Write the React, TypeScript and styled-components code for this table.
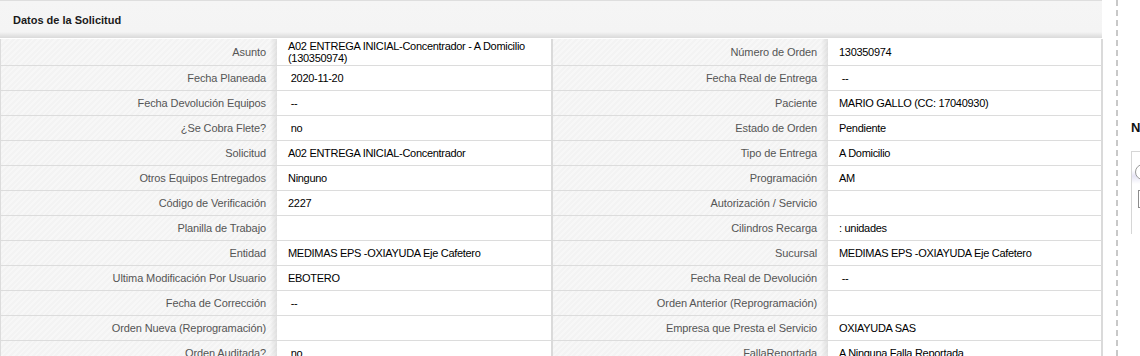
import React from 'react'
import styled, { createGlobalStyle } from 'styled-components'

const GlobalStyle = createGlobalStyle`
  html, body {
    margin: 0;
    padding: 0;
    background: #fff;
    overflow: hidden;
  }
  body {
    font-family: "Liberation Sans", Arial, sans-serif;
    font-size: 11px;
  }
`

type Field = [string, string]

// left and right halves of the request detail table
const rows: { left: Field; right: Field; tall?: boolean }[] = [
  { left: ['Asunto', 'A02 ENTREGA INICIAL-Concentrador - A Domicilio (130350974)'], right: ['Número de Orden', '130350974'], tall: true },
  { left: ['Fecha Planeada', '\u00a02020-11-20'], right: ['Fecha Real de Entrega', '\u00a0--'] },
  { left: ['Fecha Devolución Equipos', '\u00a0--'], right: ['Paciente', 'MARIO GALLO (CC: 17040930)'] },
  { left: ['¿Se Cobra Flete?', '\u00a0no'], right: ['Estado de Orden', 'Pendiente'] },
  { left: ['Solicitud', 'A02 ENTREGA INICIAL-Concentrador'], right: ['Tipo de Entrega', 'A Domicilio'] },
  { left: ['Otros Equipos Entregados', 'Ninguno'], right: ['Programación', 'AM'] },
  { left: ['Código de Verificación', '2227'], right: ['Autorización / Servicio', ''] },
  { left: ['Planilla de Trabajo', ''], right: ['Cilindros Recarga', ': unidades'] },
  { left: ['Entidad', 'MEDIMAS EPS -OXIAYUDA Eje Cafetero'], right: ['Sucursal', 'MEDIMAS EPS -OXIAYUDA Eje Cafetero'] },
  { left: ['Ultima Modificación Por Usuario', 'EBOTERO'], right: ['Fecha Real de Devolución', '\u00a0--'] },
  { left: ['Fecha de Corrección', '\u00a0--'], right: ['Orden Anterior (Reprogramación)', ''] },
  { left: ['Orden Nueva (Reprogramación)', ''], right: ['Empresa que Presta el Servicio', 'OXIAYUDA SAS'] },
  { left: ['Orden Auditada?', '\u00a0no'], right: ['FallaReportada', 'A Ninguna Falla Reportada'] },
]

const App: React.FC = () => {
  return (
    <>
      <GlobalStyle />
      <Layout>
        <Panel>
          <PanelHeader>Datos de la Solicitud</PanelHeader>
          <DetailGrid>
            {rows.map((row, i) => (
              <React.Fragment key={i}>
                <LabelCell $tall={row.tall}>{row.left[0]}</LabelCell>
                <ValueCell $tall={row.tall}>{row.left[1]}</ValueCell>
                <LabelCell $tall={row.tall}>{row.right[0]}</LabelCell>
                <ValueCell $tall={row.tall}>{row.right[1]}</ValueCell>
              </React.Fragment>
            ))}
          </DetailGrid>
        </Panel>

        <Sidebar>
          <SideTitle>N</SideTitle>
          <SideBox>
            <RadioDot />
            <SideInput />
          </SideBox>
        </Sidebar>
      </Layout>
    </>
  )
}

const Layout = styled.div`
  display: flex;
  align-items: flex-start;
  gap: 14px;
  height: 356px;
`

const Panel = styled.div`
  width: 1102px;
  flex: none;
  border-top: 1px solid #dedede;
`

const PanelHeader = styled.div`
  height: 37px;
  padding: 0 13px;
  display: flex;
  align-items: center;
  font-weight: bold;
  color: #1a1a1a;
  background: linear-gradient(#f5f5f5 0, #f4f4f4 31px, #e6e6e6 34px, #dadada 37px);
  margin-bottom: 1px;
`

const DetailGrid = styled.div`
  display: grid;
  grid-template-columns: 276px 276px 275px 275px;
  border-left: 1px solid #dcdcdc;
`

const LabelCell = styled.div<{ $tall?: boolean }>`
  height: ${(p) => (p.$tall ? 26 : 24)}px;
  padding-right: 11px;
  display: flex;
  align-items: center;
  justify-content: flex-end;
  text-align: right;
  color: #555;
  letter-spacing: -0.1px;
  white-space: nowrap;
  border-bottom: 1px solid #dcdcdc;
  background:
    linear-gradient(90deg, rgba(0, 0, 0, 0) calc(100% - 7px), rgba(0, 0, 0, 0.09) 100%),
    repeating-linear-gradient(135deg, #f3f3f3 0 2px, #f7f7f7 2px 4px);
`

const ValueCell = styled.div<{ $tall?: boolean }>`
  height: ${(p) => (p.$tall ? 26 : 24)}px;
  padding: 0 11px;
  display: flex;
  align-items: center;
  color: #000;
  line-height: 12px;
  letter-spacing: -0.3px;
  background: #fff;
  border-bottom: 1px solid #dcdcdc;
  border-right: 2px solid #dadada;
`

const Sidebar = styled.div`
  align-self: stretch;
  border-left: 2px dashed #c8c8c8;
  padding: 120px 0 0 13px;
  flex: 1;
`

const SideTitle = styled.div`
  font-weight: bold;
  font-size: 13px;
  color: #111;
  height: 24px;
`

const SideBox = styled.div`
  margin-top: 7px;
  height: 70px;
  border-left: 1px solid #d6d6d6;
  border-top: 1px solid #d6d6d6;
  padding: 12px 0 0 3px;
  background: linear-gradient(#fff 0 18px, #e6e4f4 24px, #fff 32px);
`

const RadioDot = styled.div`
  width: 14px;
  height: 14px;
  border: 1px solid #9a9a9a;
  border-radius: 50%;
  background: #fff;
`

const SideInput = styled.div`
  margin-top: 10px;
  margin-left: 3px;
  height: 16px;
  border: 1px solid #8c8c8c;
  background: #fff;
`

export default App
